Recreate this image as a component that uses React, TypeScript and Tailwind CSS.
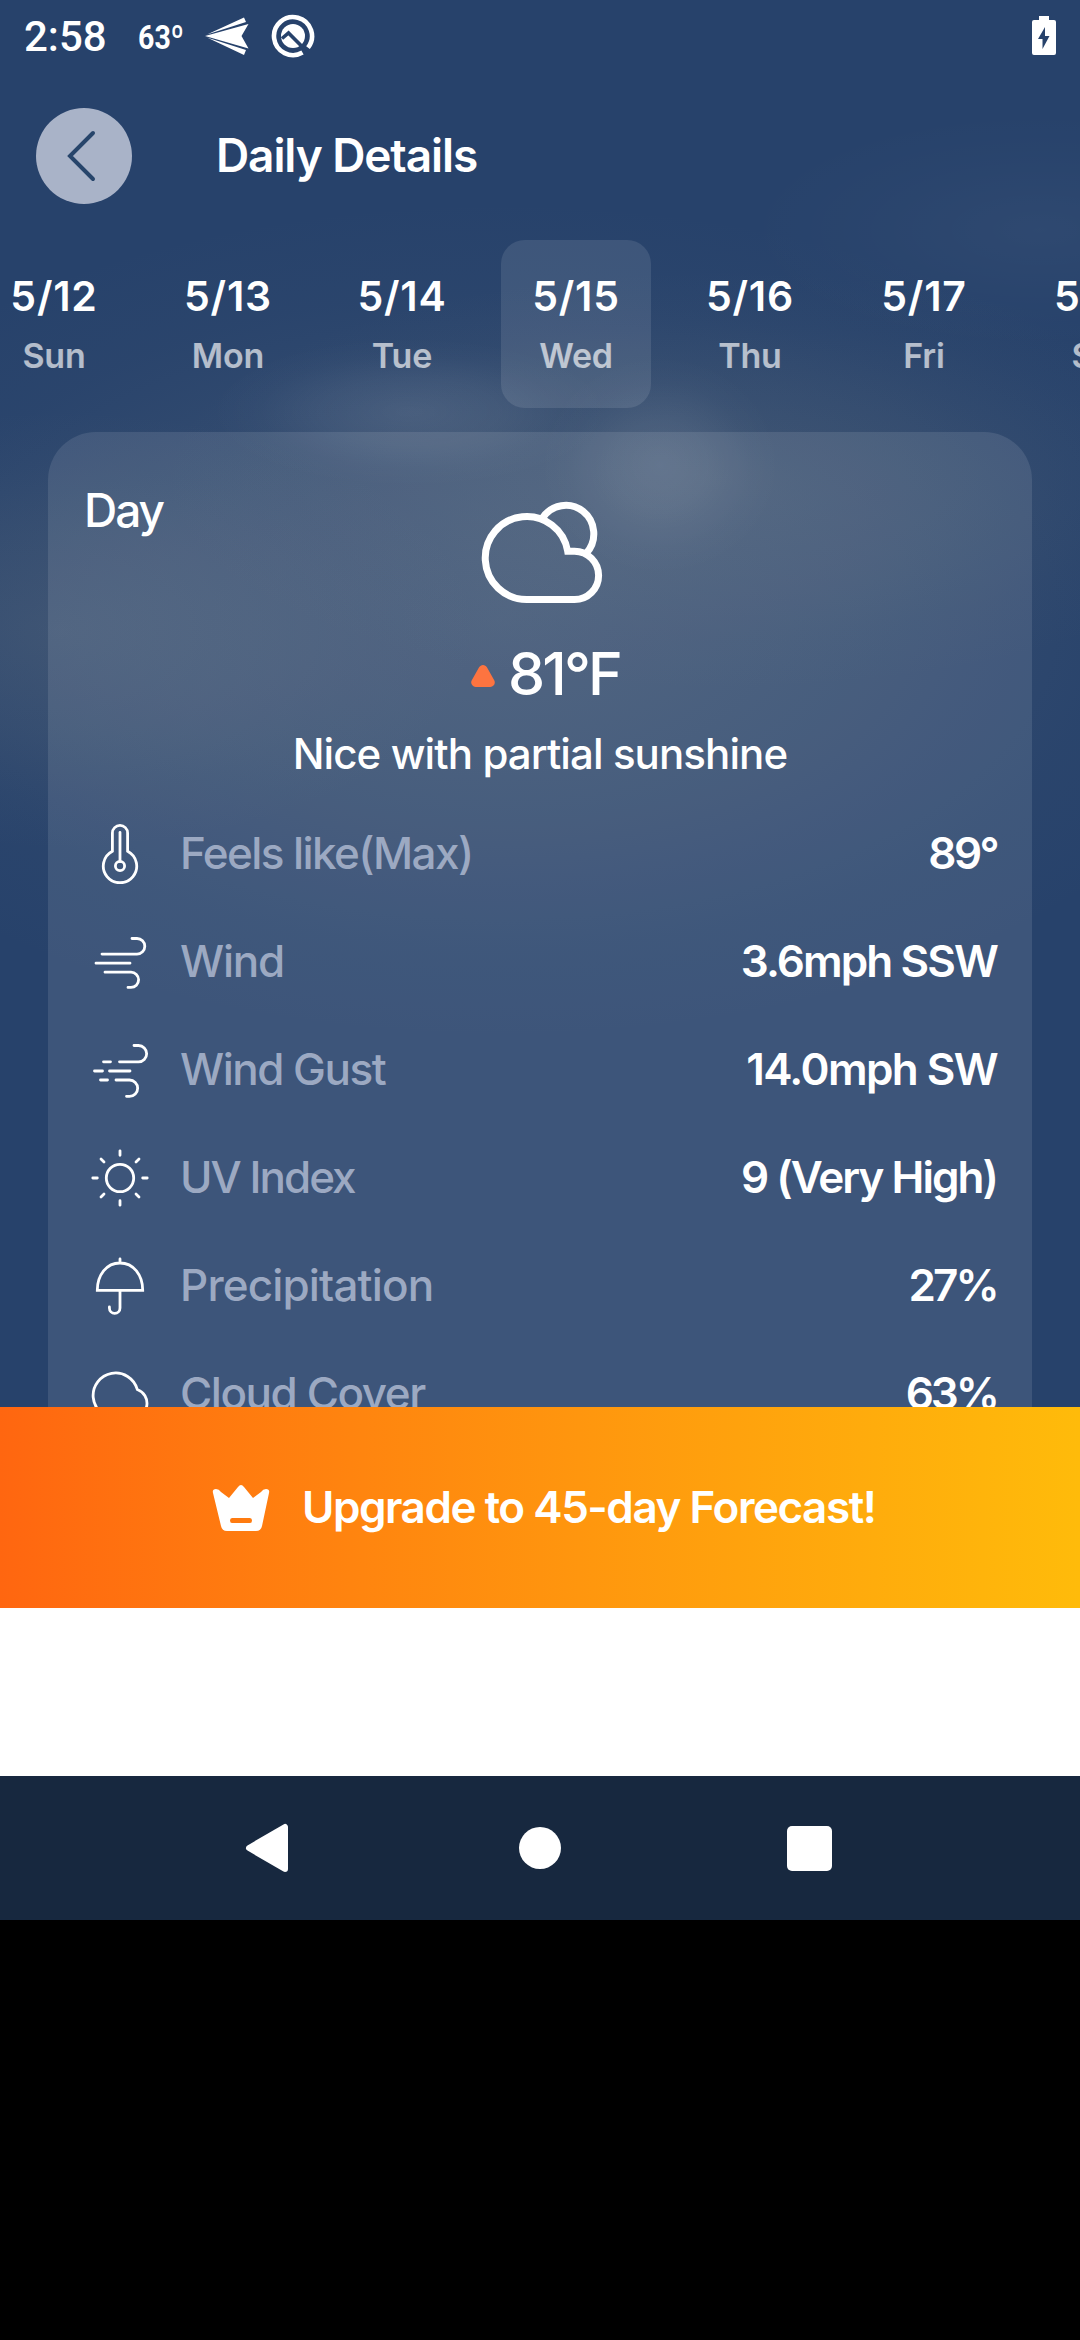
const dates = [
  ["5/12", "Sun"], ["5/13", "Mon"], ["5/14", "Tue"], ["5/15", "Wed"], ["5/16", "Thu"], ["5/17", "Fri"], ["5/18", "Sat"],
];

const stroke = { fill: "none", stroke: "white", strokeWidth: 2.8, strokeLinecap: "round" as const };

const Thermo = () => (
  <svg viewBox="0 0 60 60" className="size-[60px]" {...stroke}>
    <path d="M22.4 27.200V9a7.600 7.600 0 0 1 15.200 0v18.200a16.700 16.700 0 1 1-15.200 0z" />
    <path d="M30 8.500V37.500" />
    <circle cx="30" cy="42" r="4.600" />
  </svg>
);
const Wind = () => (
  <svg viewBox="0 0 60 60" className="size-[60px]" {...stroke}>
    <path d="M42 6.500h5a7.800 7.800 0 0 1 0 15.600H12M6 31.200h34M15 40.200h26a7.600 7.600 0 0 1 0 15.200h-3" />
  </svg>
);
const Gust = () => (
  <svg viewBox="0 0 60 60" className="size-[60px]" {...stroke}>
    <path d="M44 5.500h4.500a8 8 0 0 1 0 16.300H29.500M13.500 21.800h7M4.500 31h8M19.500 31h20.500M10.500 40h7M26 40h13.500a8 8 0 0 1 0 16.300h-3" />
  </svg>
);
const Sun = () => (
  <svg viewBox="0 0 60 60" className="size-[60px]" {...stroke}>
    <circle cx="30" cy="30" r="13.700" />
    <path d="M30 2.800v4.500M30 52.700v4.500M2.800 30h4.500M52.700 30h4.500M11 11l3 3M46 46l3 3M49 11l-3 3M14 46l-3 3" />
  </svg>
);
const Umbrella = () => (
  <svg viewBox="0 0 60 60" className="size-[60px]" {...stroke}>
    <path d="M7.300 34.300C7.300 19 16.500 7 30 7s22.700 12 22.700 27.300zM30 3v4M30 34.300V52a5.300 5.300 0 0 1-10.600 0v-1" />
  </svg>
);
const Cloud = () => (
  <svg viewBox="0 0 60 60" className="size-[60px]" {...stroke}>
    <path d="M25.500 54A22.500 22.500 0 1 1 47.300 25.500A14.700 14.700 0 0 1 43 54z" />
  </svg>
);

const rows = [
  { icon: <Thermo />, label: "Feels like(Max)", value: "89°", l: "tracking-[-1.6px]", v: "tracking-[-2.6px]" },
  { icon: <Wind />, label: "Wind", value: "3.6mph SSW", l: "tracking-[-1.25px]", v: "tracking-[-1.9px]" },
  { icon: <Gust />, label: "Wind Gust", value: "14.0mph SW", l: "tracking-[-1.5px]", v: "tracking-[-1.6px]" },
  { icon: <Sun />, label: "UV Index", value: "9 (Very High)", l: "tracking-[-2px]", v: "tracking-[-1.95px]" },
  { icon: <Umbrella />, label: "Precipitation", value: "27%", l: "tracking-[-0.85px]", v: "tracking-[-2.8px]" },
  { icon: <Cloud />, label: "Cloud Cover", value: "63%", l: "tracking-[-1.45px]", v: "tracking-[-3px]" },
];

const StatusBar = () => (
  <div className="flex h-[72px] shrink-0 items-center pl-[24px] pr-[24px] font-[Roboto,sans-serif] text-white">
    <span className="w-[114px] pt-[2px] text-[42px] font-medium leading-[50px]">2:58</span>
    <span className="w-[78px] origin-left scale-x-[0.84] pt-[1px] text-[34px] font-bold leading-[40px]">63º</span>
    <svg viewBox="0 0 46 40" className="-ml-[12px] h-[40px] w-[46px]" fill="white">
      <path d="M1 20L44.500 8l-7 12 7 12.500zM3 18.500L40 1.500l2 4.500zM3 21.500l37 17.500 2-5z" />
    </svg>
    <svg viewBox="0 0 44 44" className="ml-[21px] size-[44px]" fill="none">
      <path d="M31.500 38.500A19 19 0 1 1 37 33.700" stroke="white" strokeWidth="4.600" />
      <circle cx="22" cy="22" r="12" fill="white" />
      <path d="M11 24.500l6.500-5.500 15 15" stroke="#27426b" strokeWidth="3.600" />
    </svg>
    <svg viewBox="0 0 24 40" className="ml-auto h-[40px] w-[24px]" fill="white">
      <path fillRule="evenodd" d="M7 0h10v4h5a2 2 0 0 1 2 2v31a2 2 0 0 1-2 2H2a2 2 0 0 1-2-2V6a2 2 0 0 1 2-2h5zM13 11L6 23h4.500v10L17.500 20H13z" />
    </svg>
  </div>
);

export default function App() {
  return (
    <div className="flex h-[2340px] w-[1080px] flex-col overflow-hidden bg-black font-[Inter,sans-serif]">
      <div className="flex h-[1407px] shrink-0 flex-col overflow-hidden bg-[#27426b] bg-[radial-gradient(ellipse_120px_110px_at_660px_465px,#ffffff18,#ffffff10_40%,#ffffff04_75%,transparent),radial-gradient(ellipse_200px_75px_at_410px_412px,#ffffff18,#ffffff0e_45%,#ffffff04_75%,transparent),radial-gradient(ellipse_560px_210px_at_720px_480px,#8088882e,#8088881a_45%,#80888808_75%,transparent),radial-gradient(ellipse_420px_220px_at_60px_630px,#8a90902a,#8a909018_45%,#8a909008_75%,transparent),radial-gradient(ellipse_780px_420px_at_500px_620px,#8a909038,#8a909020_45%,#8a909008_78%,transparent),radial-gradient(ellipse_300px_120px_at_1040px_230px,#ffffff09,#ffffff03_60%,transparent)]">
        <StatusBar />
        <header className="flex h-[168px] shrink-0 items-center pl-[36px]">
          <button className="flex size-[96px] items-center justify-center rounded-full bg-[#a9b3c8]">
            <svg viewBox="0 0 30 52" className="mr-[5px] h-[52px] w-[30px]" fill="none" stroke="#27456b" strokeWidth="4" strokeLinecap="round">
              <path d="M26 3L3 26l23 23" />
            </svg>
          </button>
          <h1 className="mb-[2px] ml-[84px] text-[46px] font-semibold leading-[60px] tracking-[-1.1px] text-white">Daily Details</h1>
        </header>
        <nav className="-ml-[21px] flex h-[168px] shrink-0 gap-[24px]">
          {dates.map(([d, w]) => (
            <div key={d} className={"flex w-[150px] shrink-0 flex-col items-center rounded-[24px] pt-[34px] text-white " + (d === "5/15" ? "bg-white/10" : "")}>
              <span className="text-[41px] font-semibold leading-[44px] tracking-[0.8px]">{d}</span>
              <span className="mt-[18px] text-[34px] font-semibold leading-[40px] tracking-[-0.2px] text-white/65">{w}</span>
            </div>
          ))}
        </nav>
        <section className="mx-[48px] mt-[24px] flex h-[1100px] shrink-0 flex-col rounded-t-[48px] bg-white/10 px-[36px] text-white">
          <div className="flex h-[206px] justify-between pt-[48px]">
            <span className="w-[180px] text-[46px] font-medium leading-[60px] tracking-[-2px]">Day</span>
            <svg viewBox="0 0 128 110" className="ml-[4px] mt-[17px] h-[110px] w-[128px]" fill="none" stroke="white" strokeWidth="7">
              <path d="M64.500 21A28 28.500 0 1 1 108.500 56M48.700 102.500H96.500a24.100 24.100 0 0 0 0-48.200H89.700A41.500 41.500 0 1 0 48.700 102.500z" />
            </svg>
            <span className="w-[180px]" />
          </div>
          <div className="flex h-[72px] items-center justify-center gap-[13px] pl-[11px]">
            <svg viewBox="0 0 24 22" className="mt-[4px] h-[22px] w-[24px]" fill="#fd7440" stroke="#fd7440" strokeWidth="9" strokeLinejoin="round"><path d="M12 4.600L4.700 17.400h14.600z" /></svg>
            <span className="text-[59px] font-medium leading-[72px] tracking-[-2.9px]">81°F</span>
          </div>
          <p className="mt-[9px] h-[70px] text-center text-[42px] font-medium leading-[70px] tracking-[-0.9px]">Nice with partial sunshine</p>
          <ul className="mt-[11px]">
            {rows.map((r) => (
              <li key={r.label} className="flex h-[108px] items-center pl-[6px]">
                {r.icon}
                <span className={"mb-[2px] ml-[30px] text-[44px] font-medium text-[#9ca9c2] " + r.l}>{r.label}</span>
                <span className={"-mr-[1px] mb-[2px] ml-auto text-[44px] font-semibold " + r.v}>{r.value}</span>
              </li>
            ))}
          </ul>
        </section>
      </div>
      <div className="flex h-[201px] shrink-0 items-center bg-linear-to-r from-[#ff6610] to-[#ffbb0a] pl-[212px] text-white">
        <svg viewBox="0 0 58 46" className="h-[46px] w-[58px]" fill="white">
          <path fillRule="evenodd" d="M1 8Q0 4 4 4q3 0 5 3l8 6L26 2q3-4 6 0l9 11 8-6q2-3 5-3 4 0 3 4l-7 33q-1 5-6 5H15q-5 0-6-5zM20 33q-2 0-2 2.500t2 2.500h18q2 0 2-2.500T38 33z" />
        </svg>
        <span className="mb-[2px] ml-[32px] text-[44px] font-semibold tracking-[-1.45px]">Upgrade to 45-day Forecast!</span>
      </div>
      <div className="h-[168px] shrink-0 bg-white" />
      <div className="flex h-[144px] shrink-0 items-center bg-[#17283f]">
        <svg viewBox="0 0 44 50" className="ml-[245px] h-[50px] w-[44px]" fill="white" stroke="white" strokeWidth="6" strokeLinejoin="round"><path d="M4 25L40 4v42z" /></svg>
        <span className="ml-[230px] size-[42px] rounded-full bg-white" />
        <span className="ml-[226px] size-[45px] rounded-[5px] bg-white" />
      </div>
    </div>
  );
}
